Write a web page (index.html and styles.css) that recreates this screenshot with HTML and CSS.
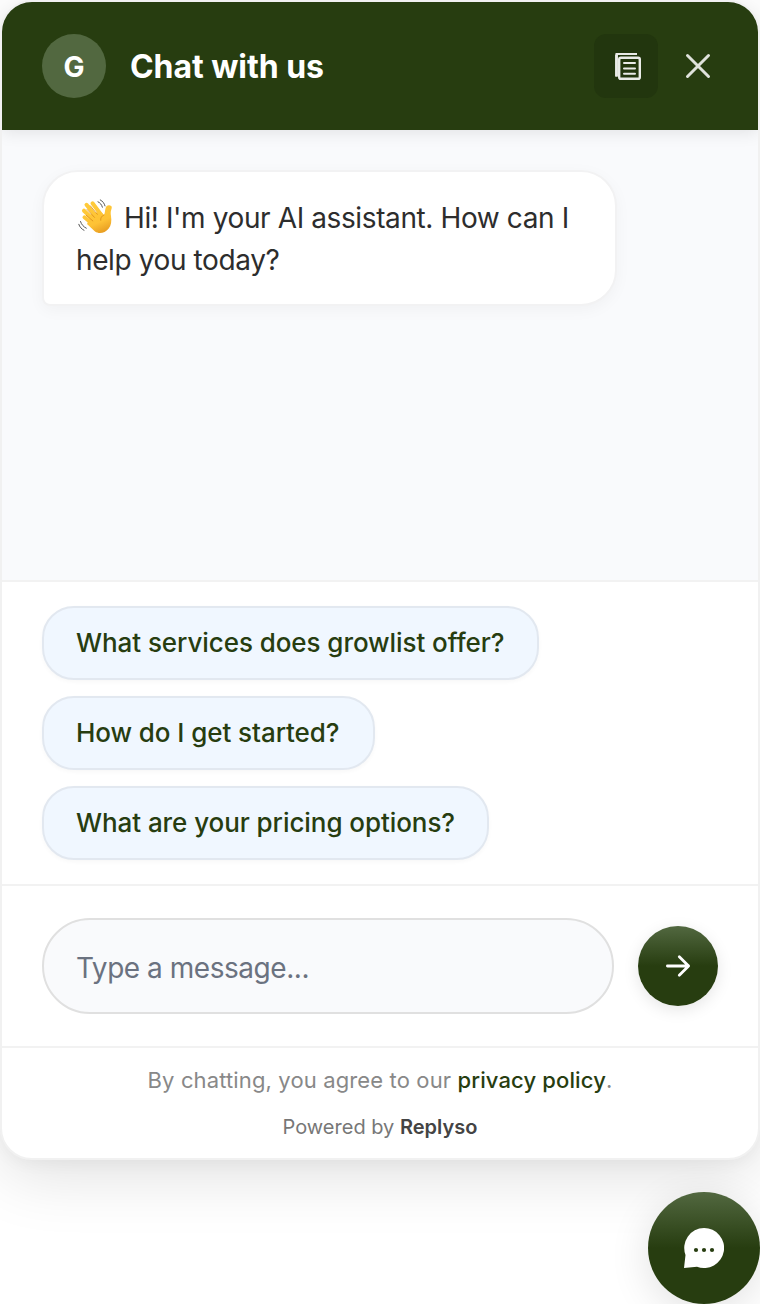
FILE: index.html
```html
<!DOCTYPE html>
<html lang="en">

<head>
  <meta charset="UTF-8">
  <title>Chat with us</title>
  <meta name="viewport" content="width=device-width, initial-scale=1.0">
  <link rel="stylesheet" href="styles.css">
</head>

<body>
  <div class="chat-widget">
    <!-- Header -->
    <header class="chat-header">
      <div class="avatar">G</div>
      <h1>Chat with us</h1>
      <button class="icon-btn icon-btn-filled" aria-label="Conversations">
        <svg width="32" height="32" viewBox="0 0 32 32" fill="none" stroke="currentColor">
          <path d="M27 4H6.500V26.500" stroke-width="2" />
          <path d="M6.500 4.500v22" stroke-width="2.800" />
          <rect x="9.200" y="7.800" width="20.600" height="21" rx="1.600" stroke-width="2.400" />
          <path d="M14 13h11M14 18.500h11M14 23.700h11" stroke-width="2" stroke-linecap="round" />
        </svg>
      </button>
      <button class="icon-btn" aria-label="Close">
        <svg width="28" height="28" viewBox="0 0 28 28" fill="none" stroke="currentColor" stroke-width="3" stroke-linecap="round">
          <path d="M3.500 3.500l21 21M24.500 3.500l-21 21" />
        </svg>
      </button>
    </header>

    <!-- Messages -->
    <main class="messages">
      <div class="message">
        <svg class="wave" viewBox="0 0 36 36" role="img" aria-label="Waving hand">
          <defs>
            <linearGradient id="skin" gradientUnits="userSpaceOnUse" x1="10" y1="4" x2="24" y2="35">
              <stop offset="0" stop-color="#ffcb3a" />
              <stop offset="0.65" stop-color="#fec235" />
              <stop offset="1" stop-color="#e69a20" />
            </linearGradient>
          </defs>
          <g fill="none" stroke="url(#skin)" stroke-linecap="round" stroke-width="4">
            <path d="M14.500 4.300L24 17" />
            <path d="M8.500 5.800L20 20" />
            <path d="M6 11.700L18 23" />
            <path d="M6.500 18.300L17 27" />
          </g>
          <path fill="url(#skin)" d="M14 14l9-1 3 3c1-2 .8-4 1.500-6.500.7-2.700 2-3.500 4.500-3.100 2.200.4 2 2.300 1.300 4.100-.7 2-.7 3.800-.3 6.500.8 5.500.2 9.500-2.500 12.800-3.500 4.500-9.500 5.500-13.500 2.800L9 25z" />
          <path fill="none" stroke="#d98c18" stroke-width="0.800" stroke-linecap="round" d="M12.300 6.800l7 8.500M9 10.400l7.500 8M8.300 16.300l6.500 5.600M26 16c-2.600 1-3.600 3-3.300 5.300" />
          <path fill="none" stroke="#555" stroke-width="1" stroke-linecap="round" d="M20 2.800c2.200.9 3.600 2.800 4.400 5.400M22.300.9c2.500 1.300 4 3.500 4.700 6M2.500 22.500c1 3.100 3 5.400 5.800 6.700M.8 25.300c.9 2.700 2.700 4.700 5.200 6" />
        </svg><span>Hi! I'm your AI assistant. How can I</span><br><span>help you today?</span>
      </div>
    </main>

    <!-- Suggested questions -->
    <section class="suggestions">
      <button class="chip chip-services">What services does growlist offer?</button>
      <button class="chip chip-start">How do I get started?</button>
      <button class="chip chip-pricing">What are your pricing options?</button>
    </section>

    <!-- Message form -->
    <form class="message-form">
      <input type="text" placeholder="Type a message..." aria-label="Type a message">
      <button type="button" class="btn-send" aria-label="Send">
        <svg width="32" height="32" viewBox="0 0 32 32" fill="none" stroke="currentColor" stroke-width="2.800" stroke-linecap="round" stroke-linejoin="round">
          <path d="M5.400 16h21.200M17.300 6.700L26.600 16l-9.300 9.300" />
        </svg>
      </button>
    </form>

    <footer class="chat-footer">
      <p class="privacy">By chatting, you agree to our <a>privacy policy</a>.</p>
      <p class="powered">Powered by <strong>Replyso</strong></p>
    </footer>
  </div>

  <!-- Launcher -->
  <button class="launcher" aria-label="Open chat">
    <svg width="40" height="40" viewBox="0 0 40 40">
      <path fill="#fff" d="M20 0a20 20 0 1 1-7 38.700L0 40l1.500-13A20 20 0 0 1 20 0z" />
      <g fill="#273d10">
        <circle cx="12" cy="22" r="2.100" />
        <circle cx="20" cy="22" r="2.100" />
        <circle cx="28" cy="22" r="2.100" />
      </g>
    </svg>
  </button>
</body>

</html>
```
FILE: styles.css
```css
* {
  box-sizing: border-box;
}

body {
  margin: 0;
  height: 1304px;
  overflow: hidden;
  background-color: #fff;
  font-family: Inter, sans-serif;
  color: #2d2d2d;
  display: flex;
  flex-direction: column;
  align-items: flex-end;
}

button,
input {
  font-family: inherit;
  margin: 0;
  padding: 0;
  border: none;
}

button {
  cursor: pointer;
  flex-shrink: 0;
}

button svg {
  display: block;
  flex-shrink: 0;
}

/* Widget */
.chat-widget {
  width: 760px;
  height: 1160px;
  flex-shrink: 0;
  display: flex;
  flex-direction: column;
  border: 2px solid #f1f1f1;
  border-radius: 32px;
  background-color: #fff;
  overflow: hidden;
  box-shadow: 0 16px 64px rgba(0, 0, 0, 0.12), 0 4px 16px rgba(0, 0, 0, 0.04);
}

/* Header */
.chat-header {
  position: relative;
  height: 128px;
  flex-shrink: 0;
  display: flex;
  align-items: center;
  padding: 0 28px 0 40px;
  background-color: #273d10;
  color: #fff;
  box-shadow: 0 2px 16px rgba(0, 0, 0, 0.1);
}

.avatar {
  width: 64px;
  height: 64px;
  padding-top: 2px;
  border-radius: 50%;
  background-color: #526840;
  display: flex;
  align-items: center;
  justify-content: center;
  font-size: 28px;
  font-weight: 700;
}

.chat-header h1 {
  flex: 1;
  margin: 2px 0 0 24px;
  font-size: 32px;
  font-weight: 650;
  line-height: 40px;
  letter-spacing: -0.05px;
}

.icon-btn {
  width: 64px;
  height: 64px;
  margin-left: 8px;
  display: flex;
  align-items: center;
  justify-content: center;
  border-radius: 12px;
  background: none;
  color: #dfe2db;
}

.icon-btn-filled {
  background-color: #22360e;
  color: #e9ebe7;
}

/* Messages */
.messages {
  flex: 1;
  padding: 40px;
  background-color: #f9fafc;
}

.message {
  width: 575px;
  height: 136px;
  padding: 25px 32px;
  border: 2px solid #f2f2f3;
  border-radius: 36px 36px 36px 8px;
  background-color: #fff;
  font-size: 28px;
  line-height: 42px;
  letter-spacing: -0.39px;
  white-space: nowrap;
  box-shadow: 0 4px 16px rgba(0, 0, 0, 0.04);
}

.wave {
  width: 36px;
  height: 36px;
  margin: 0 10px 0 2px;
  vertical-align: -7px;
}

/* Suggested questions */
.suggestions {
  display: flex;
  flex-direction: column;
  align-items: flex-start;
  gap: 16px;
  padding: 24px 40px;
  border-top: 2px solid #f2f2f2;
}

.chip {
  height: 74px;
  padding: 0 32px 1px;
  border: 2px solid #e2e8f0;
  border-radius: 32px;
  background-color: #f0f7ff;
  color: #273d10;
  font-size: 26px;
  font-weight: 550;
  letter-spacing: -0.07px;
  text-align: left;
  white-space: nowrap;
  box-shadow: 0 2px 4px rgba(0, 0, 0, 0.03);
}

.chip-services {
  width: 497px;
}

.chip-start {
  width: 333px;
}

.chip-pricing {
  width: 447px;
}

/* Message form */
.message-form {
  display: flex;
  align-items: center;
  gap: 24px;
  padding: 32px 40px;
  border-top: 2px solid #f2f2f2;
}

.message-form input {
  flex: 1;
  min-width: 0;
  height: 96px;
  padding: 4px 32px 0;
  border: 2px solid #e0e0e0;
  border-radius: 48px;
  background-color: #f9fafc;
  font-size: 28px;
  letter-spacing: -0.46px;
}

.message-form input::placeholder {
  color: #6b7280;
  opacity: 1;
}

.btn-send {
  width: 80px;
  height: 80px;
  display: flex;
  align-items: center;
  justify-content: center;
  border-radius: 50%;
  background: linear-gradient(#526840, #273d10 50%);
  color: #fff;
  box-shadow: 0 4px 16px rgba(0, 0, 0, 0.1);
}

/* Footer */
.chat-footer {
  height: 112px;
  padding-top: 15px;
  border-top: 2px solid #f2f2f2;
  text-align: center;
}

.chat-footer p {
  margin: 0;
  white-space: nowrap;
}

.chat-footer .privacy {
  color: #888;
  font-size: 22px;
  line-height: 34px;
  letter-spacing: 0.13px;
}

.privacy a {
  color: #273d10;
  font-weight: 550;
}

.chat-footer .powered {
  margin-top: 15px;
  color: #777;
  font-size: 20px;
  line-height: 30px;
}

.powered strong {
  color: #444;
  font-weight: 600;
}

/* Launcher */
.launcher {
  width: 112px;
  height: 112px;
  margin-top: 32px;
  display: flex;
  align-items: center;
  justify-content: center;
  border-radius: 50%;
  background: linear-gradient(#526840, #273d10 50%);
  box-shadow: 0 8px 40px rgba(0, 0, 0, 0.12);
}
```
